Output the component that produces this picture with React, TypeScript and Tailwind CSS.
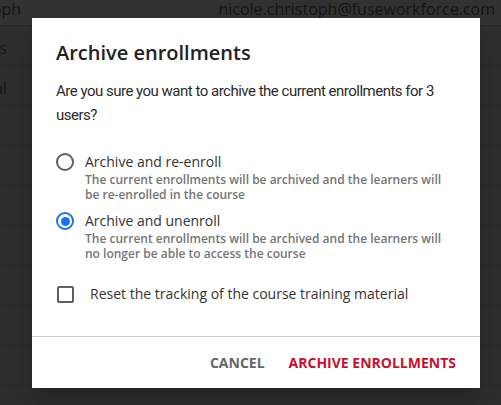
import React from "react";

const names = ["Sam Jones", "Mia Portal", "", "", "", "", "", "", ""];

export default function App() {
  return (
    <div className="relative w-[501px] h-[405px] overflow-hidden bg-[#2f2f2f]" style={{ fontFamily: "'Open Sans', sans-serif" }}>
      {/* background table (under overlay) */}
      <div className="flex flex-col">
        <div className="flex items-center h-[26px] bg-[#323232] text-[16px] text-[#151515] border-b border-[#2a2a2a]">
          <div className="w-[21px] flex justify-end overflow-hidden whitespace-nowrap mt-[-8px]">Nicole Christoph</div>
          <div className="flex-1 flex justify-end pr-[6px] whitespace-nowrap mt-[-8px]">nicole.christoph@fuseworkforce.com</div>
        </div>
        {names.map((n, i) => (
          <div key={i} className="flex items-center h-[40px] text-[16px] text-[#151515] border-b border-[#2a2a2a]">
            <div className="w-[7px] mt-[4px] flex justify-end overflow-hidden whitespace-nowrap">{n}</div>
          </div>
        ))}
      </div>

      {/* dialog */}
      <div className="absolute left-[32px] top-[18px] w-[448px] h-[370px] bg-white flex flex-col shadow-[0_11px_15px_-7px_rgba(0,0,0,0.2),0_24px_38px_3px_rgba(0,0,0,0.14)]">
        <div className="flex-1 px-6 pt-[21px]">
          <h2 className="text-[20px] leading-[28px] font-semibold text-[#222]">Archive enrollments</h2>
          <p className="mt-[12px] text-[15px] leading-[24px] tracking-[-0.5px] text-[#2b2b2b]" style={{ fontFamily: "Roboto, sans-serif" }}>
            Are you sure you want to archive the current enrollments for 3 users?
          </p>

          <div className="mt-[25px] flex flex-col gap-[9px]">
            <div className="flex items-start gap-[11px]">
              <div className="w-[18px] h-[18px] mt-[1px] rounded-full border-2 border-[#5f5f5f] shrink-0" />
              <div className="flex flex-col">
                <div className="text-[14px] leading-[20px] text-[#333]">Archive and re-enroll</div>
                <div className="text-[12px] leading-[15px] font-semibold text-[#757575]">
                  The current enrollments will be archived and the learners will be re-enrolled in the course
                </div>
              </div>
            </div>
            <div className="flex items-start gap-[11px]">
              <div className="w-[18px] h-[18px] mt-[1px] rounded-full border-2 border-[#1a73e8] shrink-0 flex items-center justify-center">
                <div className="w-[9px] h-[9px] rounded-full bg-[#1a73e8]" />
              </div>
              <div className="flex flex-col">
                <div className="text-[14px] leading-[20px] text-[#333]">Archive and unenroll</div>
                <div className="text-[12px] leading-[15px] font-semibold text-[#757575]">
                  The current enrollments will be archived and the learners will no longer be able to access the course
                </div>
              </div>
            </div>
          </div>

          <div className="mt-[23px] flex items-center gap-[16px]">
            <div className="w-[17px] h-[17px] ml-[1px] rounded-[2px] border-2 border-[#5f5f5f] shrink-0" />
            <div className="text-[14px] leading-[20px] text-[#333]">Reset the tracking of the course training material</div>
          </div>
        </div>

        <div className="h-[52px] border-t border-[#d0d0d0] flex items-center justify-end gap-[24px] pr-[24px]">
          <button className="text-[14px] font-bold text-[#666]">CANCEL</button>
          <button className="text-[14px] font-bold text-[#c8102e]">ARCHIVE ENROLLMENTS</button>
        </div>
      </div>
    </div>
  );
}
